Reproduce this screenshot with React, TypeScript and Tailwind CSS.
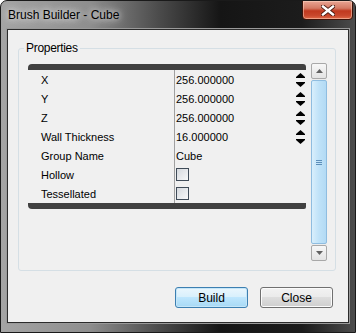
import React from "react";

const rows = [
  { label: "X", value: "256.000000", spin: true },
  { label: "Y", value: "256.000000", spin: true },
  { label: "Z", value: "256.000000", spin: true },
  { label: "Wall Thickness", value: "16.000000", spin: true },
  { label: "Group Name", value: "Cube", spin: false },
  { label: "Hollow", check: true },
  { label: "Tessellated", check: true },
];

const Spinner = () => (
  <div className="flex flex-col justify-between h-full pt-[3px] pb-[2px] pr-[1px]">
    <svg width="9" height="5" viewBox="0 0 9 5">
      <path d="M4.5 0 L9 4 L9 5 L0 5 L0 4 Z" fill="#000" />
    </svg>
    <svg width="9" height="5" viewBox="0 0 9 5">
      <path d="M0 0 H9 V1 L4.5 5 L0 1 Z" fill="#000" />
    </svg>
  </div>
);

const CheckBox = () => (
  <div className="w-[13px] h-[13px] border border-[#3f4b58] bg-[linear-gradient(135deg,#d5d9de,#f7f8f9)]" />
);

const ScrollButton = ({ up }: { up?: boolean }) => (
  <div className="h-[16px] border border-[#a8a8a8] rounded-[2px] bg-[linear-gradient(#f7f7f7,#e3e3e3)] flex items-center justify-center">
    <svg width="7" height="4" viewBox="0 0 7 4">
      {up ? (
        <path d="M3.5 0 L7 4 H0 Z" fill="#606060" />
      ) : (
        <path d="M0 0 H7 L3.5 4 Z" fill="#606060" />
      )}
    </svg>
  </div>
);

export default function App() {
  return (
    <div className="w-[356px] h-[333px] flex flex-col rounded-t-[7px] border border-[#1a1a1a] bg-[linear-gradient(90deg,#a4a4a4_0%,#8e8e8e_25%,#4a4a4a_45%,#151515_62%,#1c1c1c_85%,#4c4c4c_100%)] font-['Liberation_Sans',Arial,sans-serif] text-black overflow-hidden">
      <div className="h-[28px] flex justify-between items-start">
        <div className="pl-[7px] pt-[7px] text-[12px] leading-[14px] text-black [text-shadow:0_0_6px_#e8e8e8,0_0_10px_#d8d8d8]">
          Brush Builder - Cube
        </div>
        <div className="mr-[2px] -mt-[1px] w-[51px] h-[20px] rounded-b-[4px] border border-[#3d1208] bg-[linear-gradient(#e9a594_0%,#d47a64_40%,#c1391f_55%,#c8472c_80%,#e06a48_100%)] flex items-center justify-center shadow-[inset_0_0_0_1px_rgba(255,220,200,0.5)]">
          <svg width="14" height="11" viewBox="0 0 14 11">
            <path d="M2 1.5 L12 9.5 M12 1.5 L2 9.5" stroke="#4a1a10" strokeWidth="4.2" strokeLinecap="square" />
            <path d="M2 1.5 L12 9.5 M12 1.5 L2 9.5" stroke="#fff" strokeWidth="2.4" strokeLinecap="square" />
          </svg>
        </div>
      </div>

      <div className="mx-[6px] mb-[9px] flex-1 border border-[#2b2b2b] bg-[#f0f0f0] flex flex-col shadow-[0_0_0_1px_#9a9a9a]">
        <div className="ml-[10px] mr-[12px] mt-[18px] h-[223px] border border-[#d5dfe5] rounded-[3px] relative pl-[9px] pr-[4px] pt-[14px] flex gap-[5px]">
          <div className="absolute left-[5px] -top-[8px] px-[2px] bg-[#f0f0f0] text-[12px] leading-[14px] tracking-[-0.3px]">
            Properties
          </div>

          <div className="w-[278px] mt-[1px] self-start flex flex-col">
            <div className="h-[6px] bg-[#404040] rounded-tl-[4px] rounded-tr-[3px]" />
            {rows.map((r) => (
              <div key={r.label} className="h-[19px] flex text-[11px]">
                <div className="w-[147px] pl-[13px] pt-[2px] flex items-center border-r border-[#a0a0a0]">
                  {r.label}
                </div>
                <div className="flex-1 pl-[1px] flex items-center justify-between">
                  {r.check ? <CheckBox /> : <span className="pt-[2px]">{r.value}</span>}
                  {r.spin && <Spinner />}
                </div>
              </div>
            ))}
            <div className="h-[6px] bg-[#404040] rounded-bl-[4px] rounded-br-[2px]" />
          </div>

          <div className="w-[16px] h-[198px] flex flex-col bg-[#ececec]">
            <ScrollButton up />
            <div className="flex-1 my-[1px] border border-[#8fbde0] rounded-[2px] bg-[linear-gradient(90deg,#d9effc,#bfe2f8_50%,#b3daf4)] flex flex-col items-center justify-center gap-[1px]">
              <div className="w-[6px] h-[1px] bg-[#5d8fba]" />
              <div className="w-[6px] h-[1px] bg-[#5d8fba]" />
              <div className="w-[6px] h-[1px] bg-[#5d8fba]" />
            </div>
            <ScrollButton />
          </div>
        </div>

        <div className="mt-[16px] flex justify-end gap-[12px] pr-[15px]">
          <button className="w-[73px] h-[21px] rounded-[3px] border border-[#3c7fb1] bg-[linear-gradient(#eaf6fd_0%,#d9f0fc_45%,#bee6fd_50%,#a7d9f5_100%)] shadow-[inset_0_0_0_1px_#c5e6f8] text-[12px] leading-none">
            Build
          </button>
          <button className="w-[73px] h-[21px] rounded-[3px] border border-[#707070] bg-[linear-gradient(#f2f2f2_0%,#ebebeb_45%,#dddddd_50%,#cfcfcf_100%)] shadow-[inset_0_0_0_1px_#fbfbfb] text-[12px] leading-none">
            Close
          </button>
        </div>
      </div>
    </div>
  );
}
